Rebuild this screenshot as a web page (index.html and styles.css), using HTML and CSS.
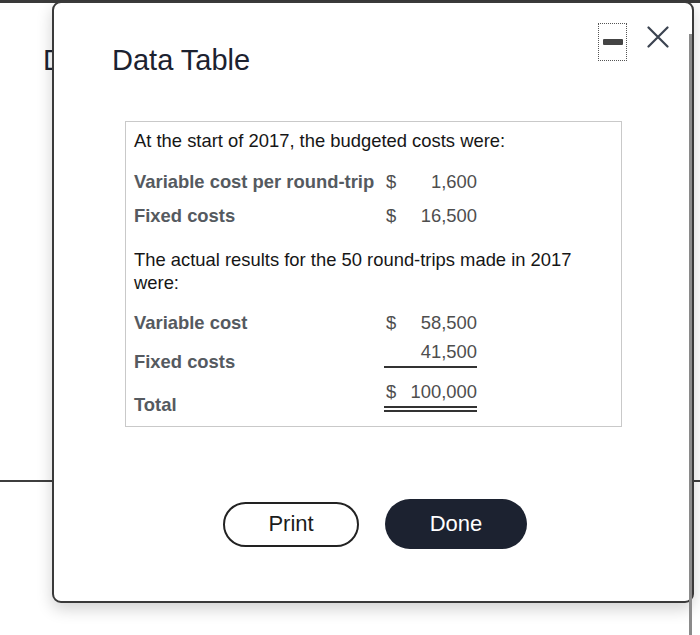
FILE: index.html
```html
<!DOCTYPE html>
<html>
<head>
<meta charset="utf-8">
<link rel="stylesheet" href="styles.css">
</head>
<body>
<div class="page">
  <div class="topbar"></div>
  <div class="bg-title">D</div>
  <div class="bg-rule"></div>
  <div class="scrollbar"></div>

  <div class="modal">
    <div class="modal-head">
      <h1 class="title">Data Table</h1>
      <button class="btn-min" aria-label="Minimize"><span class="min-bar"></span></button>
      <button class="btn-close" aria-label="Close">
        <svg width="22" height="22" viewBox="0 0 22 22"><path d="M1.5 1.5 L20.5 20.5 M20.5 1.5 L1.5 20.5" stroke="#3b4350" stroke-width="2.2" fill="none" stroke-linecap="round"/></svg>
      </button>
    </div>

    <div class="data">
      <p class="para">At the start of 2017, the budgeted costs were:</p>
      <div class="row r1"><span class="lbl">Variable cost per round-trip</span><span class="val"><span>$</span><span>1,600</span></span></div>
      <div class="row r2"><span class="lbl">Fixed costs</span><span class="val"><span>$</span><span>16,500</span></span></div>
      <p class="para p2">The actual results for the 50 round-trips made in 2017 were:</p>
      <div class="row ra"><span class="lbl">Variable cost</span><span class="val"><span>$</span><span>58,500</span></span></div>
      <div class="row rb"><span class="lbl">Fixed costs</span><span class="val"><span></span><span>41,500</span></span></div>
      <div class="row rc"><span class="lbl">Total</span><span class="val"><span>$</span><span>100,000</span></span></div>
    </div>

    <div class="actions">
      <button class="btn btn-print">Print</button>
      <button class="btn btn-done">Done</button>
    </div>
  </div>
</div>
</body>
</html>
```

FILE: styles.css
```css
* { box-sizing: border-box; }
html, body { margin: 0; padding: 0; }
body {
  width: 700px;
  height: 635px;
  overflow: hidden;
  background: #fff;
  font-family: "Liberation Sans", Arial, sans-serif;
}
.page {
  position: relative;
  width: 700px;
  height: 635px;
}
.topbar {
  height: 3px;
  background: #3a3a3a;
}
.bg-title {
  margin-top: 41px;
  padding-left: 43px;
  font-size: 29px;
  line-height: 32px;
  color: #1c2230;
}
.bg-rule {
  margin-top: 404px;
  height: 2px;
  background: #3e3e3e;
}
.scrollbar {
  position: absolute;
  left: 689px;
  top: 34px;
  bottom: 0;
  width: 3px;
  background: #8a8a8a;
  z-index: 3;
}
.modal {
  position: absolute;
  left: 52px;
  top: 1px;
  width: 642px;
  height: 602px;
  background: #fff;
  border: 2px solid #3a3a3a;
  border-radius: 9px;
  box-shadow: 0 6px 16px rgba(0, 0, 0, 0.18);
  z-index: 2;
  display: flex;
  flex-direction: column;
}
.modal-head {
  display: flex;
  align-items: flex-start;
  padding: 20px 23px 0 58px;
}
.title {
  flex: 1;
  margin: 21px 0 0 0;
  font-size: 29px;
  line-height: 32px;
  font-weight: normal;
  color: #1c2230;
}
.btn-min {
  width: 29px;
  height: 38px;
  padding: 0;
  margin: 0;
  background: #fff;
  border: 1px dotted #555;
  display: flex;
  align-items: center;
  justify-content: center;
}
.min-bar {
  display: block;
  width: 20px;
  height: 6px;
  border-radius: 1px;
  background: #444;
}
.btn-close {
  margin: 3px 0 0 20px;
  padding: 0;
  width: 22px;
  height: 22px;
  border: 0;
  background: transparent;
  display: block;
}
.btn-close svg { display: block; }

.data {
  margin: 45px 0 0 71px;
  width: 497px;
  border: 1px solid #c9c9c9;
  padding: 7px 0 10px 8px;
  font-size: 18.4px;
  line-height: 23px;
  color: #161616;
}
.para { margin: 0; width: 470px; }
.p2 { margin-top: 21px; }
.row {
  display: flex;
  align-items: flex-start;
}
.lbl {
  width: 250px;
  font-weight: bold;
  color: #555a60;
}
.val {
  width: 93px;
  padding-left: 2px;
  display: flex;
  justify-content: space-between;
  color: #4e4e4e;
}
.r1 { margin-top: 18px; }
.r2 { margin-top: 11px; }
.ra { margin-top: 17px; }
.rb .lbl { padding-top: 16px; }
.rb .val {
  padding-top: 6px;
  padding-bottom: 3px;
  border-bottom: 2px solid #333;
}
.rc .lbl { padding-top: 20px; }
.rc .val {
  padding-top: 7px;
  padding-bottom: 3px;
  border-bottom: 6px double #333;
}

.actions {
  margin-top: 72px;
  display: flex;
  justify-content: center;
  align-items: center;
  gap: 26px;
  padding-left: 4px;
}
.btn {
  font-family: "Liberation Sans", Arial, sans-serif;
  font-size: 22px;
  padding: 0;
  border-radius: 26px;
}
.btn-print {
  width: 136px;
  height: 45px;
  background: #fff;
  border: 2px solid #222;
  color: #1c1c1c;
}
.btn-done {
  width: 142px;
  height: 50px;
  background: #1c2230;
  border: 0;
  color: #fff;
}
```
